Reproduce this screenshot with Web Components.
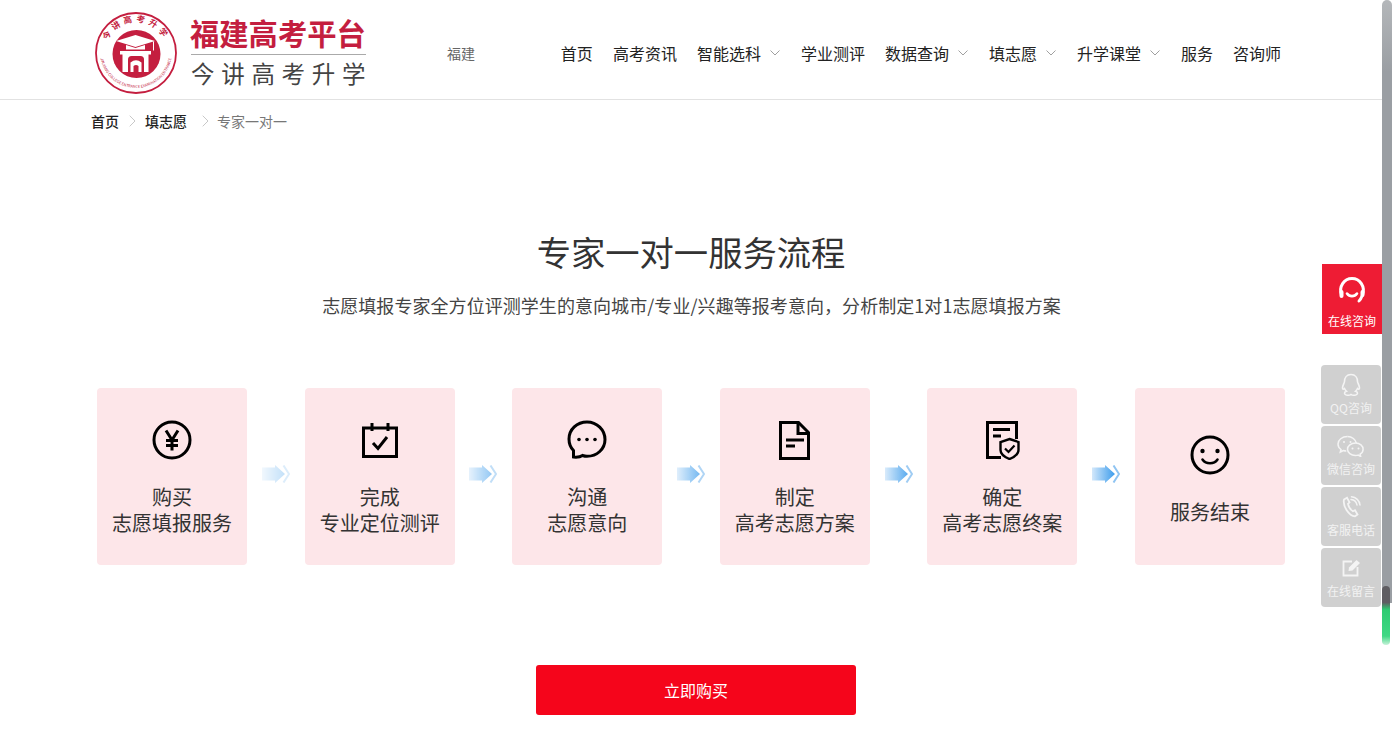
<!DOCTYPE html>
<html lang="zh-CN">
<head>
<meta charset="utf-8">
<title>专家一对一</title>
<style>
  html, body { margin: 0; padding: 0; height: 746px; overflow: hidden; background: #fff; }
  body { font-family: "Noto Sans CJK SC", "Noto Sans", sans-serif; color: #333; }
</style>
</head>
<body>
<site-header></site-header>
<bread-crumb></bread-crumb>
<flow-section></flow-section>
<side-rail></side-rail>
<page-scrollbar></page-scrollbar>

<script>
const chevronDown = `<svg width="10" height="6" viewBox="0 0 10 6" fill="none" stroke="#a0a0a0" stroke-width="1"><path d="M.5.5 5 5 9.5.5"/></svg>`;
const chevronRight = `<svg width="7" height="12" viewBox="0 0 7 12" fill="none" stroke="#c8c8c8" stroke-width="1"><path d="M.7.7 6 6 .7 11.3"/></svg>`;

// step icons, all on a 40x40 box
const stepIcons = {
  yen: `<circle cx="20" cy="20" r="18" stroke-width="3"/><path d="M14 10.500 20 20l6-9.500M14 20.500h12M14 25.500h12M20 20v10.500" stroke-width="3"/>`,
  calendar: `<path d="M3.500 8h33v28.500h-33zM12 3v8M28 3v8" stroke-width="3"/><path d="m13 23 5 5.500L27 17" stroke-width="3"/>`,
  chat: `<path d="M6.500 37c5 .5 7.500-.5 9-1.500 1.500.5 3 .8 4.500.8 10 0 18-7.200 18-16.800S30 2 20 2 2 9.500 2 19c0 4.500 1.500 8.500 4.500 11.500z" stroke-width="3"/><circle cx="12" cy="19.500" r="1.800" fill="#000" stroke="none"/><circle cx="20" cy="19.500" r="1.800" fill="#000" stroke="none"/><circle cx="28" cy="19.500" r="1.800" fill="#000" stroke="none"/>`,
  doc: `<path d="M5.500 2.500h18l10 10v26h-28z" stroke-width="3"/><path d="M23 2.500v11h10.500" stroke-width="3"/><path d="M11 20h18M11 26h9" stroke-width="2.800"/>`,
  cert: `<path d="M19 37.500H5.500v-35h29V19" stroke-width="3"/><path d="M11 9.500h17M11 16h8" stroke-width="2.800"/><path d="M27.500 19l9 3v8c0 4-4 7-9 9-5-2-9-5-9-9v-8z" fill="#fde6e9" stroke-width="2.400"/><path d="m23 28.500 3.500 3.500 6-6.500" stroke-width="2.200"/>`,
  smile: `<circle cx="20" cy="20" r="18" stroke-width="3"/><circle cx="12.500" cy="16" r="2.200" fill="#000" stroke="none"/><circle cx="27.500" cy="16" r="2.200" fill="#000" stroke="none"/><path d="M12.500 24.500c3.500 5 11.500 5 15 0" stroke-width="2.600" stroke-linecap="round"/>`,
};

// side rail icons, white line drawings
const railIcons = {
  headset: `<svg width="32" height="32" viewBox="0 0 32 32" fill="none" stroke="#fff" stroke-width="3" stroke-linecap="round"><path d="M5.500 20C2.500 11.500 8 3.500 16 3.500S29.500 11.500 26.500 20c-.8 2-1.800 4.500-3.500 6"/><path d="M11 18.500c2.500 3.500 7.500 3.500 10 0" stroke-width="2.600"/><path d="M5.500 17v4M26.500 17v3" stroke-width="4"/></svg>`,
  qq: `<svg width="22" height="24" viewBox="0 0 22 24" fill="none" stroke="#f4f4f4" stroke-width="1.600"><path d="M11 1.500c-4.500 0-6.500 3.500-6.500 7 0 1.500-2 4-2 6.500 0 1.500 1 1.500 2 .5.500 1 1 2 2 2.800-1.500.5-2 1.200-2 2 0 1.200 2.500 2 4 2 1.500 0 2-.5 2.500-.8.500.3 1 .8 2.500.8s4-.8 4-2c0-.8-.5-1.500-2-2 1-.8 1.500-1.800 2-2.800 1 1 2 1 2-.5 0-2.500-2-5-2-6.500 0-3.500-2-7-6.500-7z"/></svg>`,
  wechat: `<svg width="28" height="22" viewBox="0 0 28 22" fill="none" stroke="#f4f4f4" stroke-width="1.500"><path d="M10.500 1.500C5 1.500 1 5 1 9c0 2.300 1.200 4.200 3 5.500L3.300 17l3-1.500c1 .3 2 .5 3 .5"/><path d="M19.500 8.500c-.8-4-4.500-7-9-7"/><path d="M18.500 8C14 8 10.500 10.800 10.500 14.300s3.500 6.200 8 6.200c1 0 1.800-.1 2.600-.4l2.600 1.400-.6-2.300c1.800-1.100 3-2.900 3-4.900C26.100 10.800 23 8 18.500 8z" fill="#d0d0d0"/><circle cx="7" cy="7" r="1" fill="#f4f4f4" stroke="none"/><circle cx="13.500" cy="7" r="1" fill="#f4f4f4" stroke="none"/><circle cx="15.500" cy="13.500" r="1" fill="#f4f4f4" stroke="none"/><circle cx="21.500" cy="13.500" r="1" fill="#f4f4f4" stroke="none"/></svg>`,
  phone: `<svg width="20" height="22" viewBox="0 0 20 22" fill="none" stroke="#f4f4f4" stroke-width="1.800" stroke-linecap="round"><path d="M3 3.500 6 1.800l2.500 4.500-1.500 1.500c.5 3 2.500 6 5 7.500l2-1 2.500 4.200-2.500 1.800C8 20 1.500 10 3 3.500z"/><path d="M10 3.500c3 .3 5.500 2.500 6 5.500M10.500 .8c4.500.3 8 3.800 8.500 8.200" stroke-width="1.500"/></svg>`,
  edit: `<svg width="19" height="18" viewBox="0 0 19 18" fill="none" stroke="#f4f4f4" stroke-width="1.800"><path d="M10 2.500H1.500v14h14V8"/><path d="M6.500 12l.5-3.500L14.500 1 18 4l-7.500 7.500z" fill="#f4f4f4" stroke="none"/></svg>`,
};

class SiteLogo extends HTMLElement {
  constructor() {
    super();
    this.attachShadow({ mode: "open" });
    this.shadowRoot.innerHTML = `
      <style>
        :host { display: flex; align-items: center; gap: 12px; }
        svg { display: block; margin-top: 6px; }
        .names { display: flex; flex-direction: column; width: 176px; margin-top: 3px; }
        .big { font-size: 29.300px; line-height: 41px; font-weight: 700; color: #c41e3f; white-space: nowrap; }
        .small { font-size: 23.500px; line-height: 36px; color: #444; letter-spacing: 6.700px; white-space: nowrap; border-top: 1px solid #aaa; margin: 1px 0 0 1px; }
      </style>
      <svg width="84" height="82" viewBox="0 0 84 82">
        <defs>
          <path id="top" d="M11 41A31 31 0 0 1 73 41"/>
          <path id="bot" d="M6.500 34A36 36 0 1 0 77.500 34"/>
        </defs>
        <circle cx="42" cy="41" r="40" fill="#fff" stroke="#c41e3f" stroke-width="1.800"/>
        <text font-size="8.500" font-weight="700" fill="#c41e3f" text-anchor="middle" letter-spacing="3.500"><textPath href="#top" startOffset="50%">今讲高考升学</textPath></text>
        <text font-size="3.800" fill="#c41e3f" text-anchor="middle"><textPath href="#bot" startOffset="50%">JINJIANG COLLEGE ENTRANCE EXAMINATION ENTRANCE</textPath></text>
        <circle cx="42.500" cy="42" r="24" fill="#c41e3f"/>
        <path d="M22 29l19.500-6 19.500 6-19.500 6z" fill="#fff"/>
        <path d="M32 33v4.500h19V33l-9.500 3z" fill="#fff"/>
        <path d="M59.500 29.500v9" stroke="#fff" stroke-width="1"/>
        <path d="M26 39h31v3.500h-2.500V60h-26V42.500H26z" fill="#fff"/>
        <path d="M34 60V47.500q0-3.500 3.500-3.500h9q3.500 0 3.500 3.500V60z" fill="#c41e3f"/>
        <path d="M36.500 60v-9.500q5.500-4.500 11 0V60z" fill="#fff"/>
        <path d="M39.500 60v-6q2.500-2 5 0v6z" fill="#c41e3f"/>
      </svg>
      <div class="names">
        <div class="big">福建高考平台</div>
        <div class="small">今讲高考升学</div>
      </div>`;
  }
}

class NavItem extends HTMLElement {
  constructor() {
    super();
    this.attachShadow({ mode: "open" });
  }
  connectedCallback() {
    const hasMenu = this.hasAttribute("menu");
    this.shadowRoot.innerHTML = `
      <style>
        :host { display: flex; align-items: center; font-size: 16px; line-height: 24px; color: #222; white-space: nowrap; }
        svg { display: block; margin-left: 9px; margin-right: 1px; }
      </style>
      <slot></slot>${hasMenu ? chevronDown : ""}`;
  }
}

class SiteHeader extends HTMLElement {
  constructor() {
    super();
    this.attachShadow({ mode: "open" });
    this.shadowRoot.innerHTML = `
      <style>
        :host { display: block; height: 99px; border-bottom: 1px solid #e2e2e2; box-sizing: content-box; }
        .bar { height: 99px; display: flex; align-items: center; padding: 0 111px 0 94px; }
        .city { margin-left: 81px; padding-top: 6px; font-size: 14px; color: #666; }
        nav { margin-left: auto; padding-top: 6px; display: flex; gap: 20px; }
      </style>
      <div class="bar">
        <site-logo></site-logo>
        <div class="city">福建</div>
        <nav>
          <nav-item>首页</nav-item>
          <nav-item>高考资讯</nav-item>
          <nav-item menu>智能选科</nav-item>
          <nav-item>学业测评</nav-item>
          <nav-item menu>数据查询</nav-item>
          <nav-item menu>填志愿</nav-item>
          <nav-item menu>升学课堂</nav-item>
          <nav-item>服务</nav-item>
          <nav-item>咨询师</nav-item>
        </nav>
      </div>`;
  }
}

class BreadCrumb extends HTMLElement {
  constructor() {
    super();
    this.attachShadow({ mode: "open" });
    this.shadowRoot.innerHTML = `
      <style>
        :host { display: flex; align-items: center; height: 42px; padding-left: 91px; font-size: 14px; color: #777; }
        b { font-weight: 500; color: #222; }
        svg { display: block; margin: 0 9px 0 10px; }
        span { color: #777; margin-left: 4px; }
        b + svg + b + svg { margin-left: 15px; margin-right: 4px; }
      </style>
      <b>首页</b>${chevronRight}<b>填志愿</b>${chevronRight}<span>专家一对一</span>`;
  }
}

class FlowStep extends HTMLElement {
  constructor() {
    super();
    this.attachShadow({ mode: "open" });
  }
  connectedCallback() {
    const icon = stepIcons[this.getAttribute("icon")];
    this.shadowRoot.innerHTML = `
      <style>
        :host { display: flex; flex-direction: column; align-items: center; justify-content: center; box-sizing: border-box;
                width: 150.200px; height: 177px; padding-top: 2px; background: #fde6e9; border-radius: 4px;
                font-size: 20px; line-height: 26px; color: #333; text-align: center; }
        :host([icon="smile"]) { padding-top: 7px; }
        svg { display: block; margin-bottom: 24px; }
      </style>
      <svg width="40" height="40" viewBox="0 0 40 40" fill="none" stroke="#000" stroke-linejoin="miter">${icon}</svg>
      <div><slot></slot></div>`;
  }
}

class FlowArrow extends HTMLElement {
  constructor() {
    super();
    this.attachShadow({ mode: "open" });
  }
  connectedCallback() {
    const n = this.getAttribute("n");
    this.shadowRoot.innerHTML = `
      <style>
        :host { display: flex; align-items: center; justify-content: center; flex: 1; height: 177px; padding-bottom: 6px; box-sizing: border-box; opacity: ${this.getAttribute("level")}; }
      </style>
      <svg width="28" height="18" viewBox="0 0 28 18">
        <defs><linearGradient id="g${n}" x1="0" x2="1" y1="0" y2="0">
          <stop offset="0" stop-color="#d3e8fb"/><stop offset="1" stop-color="#3c9cec"/>
        </linearGradient></defs>
        <path d="M0 2.500h13V0l10 9-10 9v-2.500H0z" fill="url(#g${n})"/>
        <path d="M21.500 .5 27 9l-5.500 8.500" fill="none" stroke="#8fc4f2" stroke-width="2"/>
      </svg>`;
  }
}

class FlowSection extends HTMLElement {
  constructor() {
    super();
    this.attachShadow({ mode: "open" });
    this.shadowRoot.innerHTML = `
      <style>
        :host { display: block; }
        h1 { margin: 82px 0 0; font-size: 34.300px; line-height: 54px; font-weight: 400; color: #333; text-align: center; padding-right: 10px; }
        p { margin: 12px 0 0; font-size: 18px; line-height: 30px; color: #444; text-align: center; padding-right: 9px; letter-spacing: .06px; }
        .steps { display: flex; margin: 68px 0 0 97px; width: 1188px; }
        .foot { display: flex; justify-content: center; margin-top: 100px; }
        button { width: 320px; height: 50px; border: none; border-radius: 3px; background: #f5051b; color: #fff; font: inherit; font-size: 16px; }
      </style>
      <h1>专家一对一服务流程</h1>
      <p>志愿填报专家全方位评测学生的意向城市/专业/兴趣等报考意向，分析制定1对1志愿填报方案</p>
      <div class="steps">
        <flow-step icon="yen">购买<br>志愿填报服务</flow-step>
        <flow-arrow n="1" level="0.3"></flow-arrow>
        <flow-step icon="calendar">完成<br>专业定位测评</flow-step>
        <flow-arrow n="2" level="0.55"></flow-arrow>
        <flow-step icon="chat">沟通<br>志愿意向</flow-step>
        <flow-arrow n="3" level="0.7"></flow-arrow>
        <flow-step icon="doc">制定<br>高考志愿方案</flow-step>
        <flow-arrow n="4" level="0.85"></flow-arrow>
        <flow-step icon="cert">确定<br>高考志愿终案</flow-step>
        <flow-arrow n="5" level="1"></flow-arrow>
        <flow-step icon="smile">服务结束</flow-step>
      </div>
      <div class="foot"><button>立即购买</button></div>`;
  }
}

class RailItem extends HTMLElement {
  constructor() {
    super();
    this.attachShadow({ mode: "open" });
  }
  connectedCallback() {
    this.shadowRoot.innerHTML = `
      <style>
        :host { display: flex; flex-direction: column; align-items: center; box-sizing: border-box; width: 60px; height: 59px;
                background: #d0d0d0; border-radius: 4px; color: #f2f2f2; font-size: 12px; line-height: 16px; padding-top: 7px; }
        .ico { height: 26px; display: flex; align-items: center; justify-content: center; margin-bottom: 2px; }
      </style>
      <div class="ico">${railIcons[this.getAttribute("icon")]}</div>
      <slot></slot>`;
  }
}

// fixed contact rail, sits over the page on the right edge
class SideRail extends HTMLElement {
  constructor() {
    super();
    this.attachShadow({ mode: "open" });
    this.shadowRoot.innerHTML = `
      <style>
        :host { position: absolute; top: 264px; left: 1321px; width: 61px; display: flex; flex-direction: column; align-items: flex-start; }
        .online { margin-left: 1px; width: 60px; height: 70px; box-sizing: border-box; padding-top: 11px; background: #ee1c34; color: #fff;
                  font-size: 12px; line-height: 16px; display: flex; flex-direction: column; align-items: center; }
        .online svg { display: block; margin-bottom: 6px; }
        .list { margin-top: 31px; display: flex; flex-direction: column; gap: 2px; }
      </style>
      <div class="online">${railIcons.headset}在线咨询</div>
      <div class="list">
        <rail-item icon="qq">QQ咨询</rail-item>
        <rail-item icon="wechat">微信咨询</rail-item>
        <rail-item icon="phone">客服电话</rail-item>
        <rail-item icon="edit">在线留言</rail-item>
      </div>`;
  }
}

class PageScrollbar extends HTMLElement {
  constructor() {
    super();
    this.attachShadow({ mode: "open" });
    this.shadowRoot.innerHTML = `
      <style>
        :host { position: absolute; top: 0; left: 1382px; width: 10px; height: 746px; }
        .thumb { position: absolute; top: 0; left: 0; width: 10px; height: 603px; background: linear-gradient(#b4b7ba, #9a9ea3 12%, #9a9ea3); border-radius: 5px 5px 0 0; }
        .lift { position: absolute; top: 586px; left: 0; width: 8px; height: 59px; border-radius: 4px;
                background: linear-gradient(#5f5d62 0, #5f5d62 28%, #2ecb72 40%, #3fd884 85%, #c8f2da 100%); }
      </style>
      <div class="thumb"></div>
      <div class="lift"></div>`;
  }
}

customElements.define("site-logo", SiteLogo);
customElements.define("nav-item", NavItem);
customElements.define("site-header", SiteHeader);
customElements.define("bread-crumb", BreadCrumb);
customElements.define("flow-step", FlowStep);
customElements.define("flow-arrow", FlowArrow);
customElements.define("flow-section", FlowSection);
customElements.define("rail-item", RailItem);
customElements.define("side-rail", SideRail);
customElements.define("page-scrollbar", PageScrollbar);
</script>
</body>
</html>
